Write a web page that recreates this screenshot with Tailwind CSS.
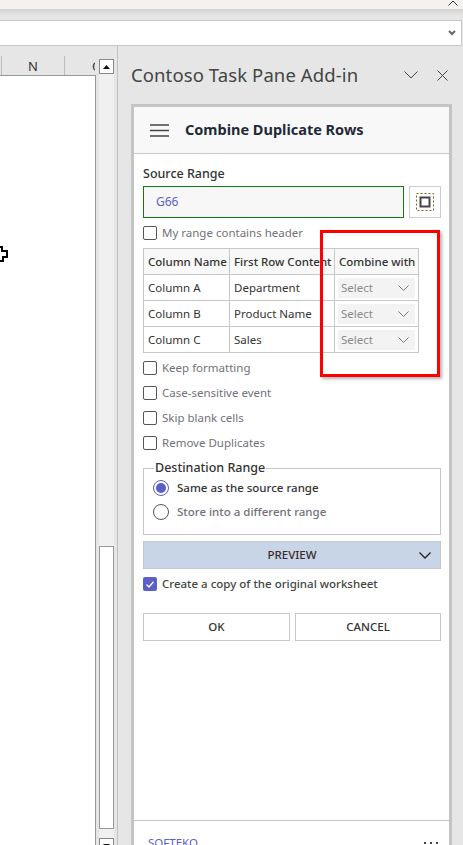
<!DOCTYPE html>
<html lang="en">
<head>
  <meta charset="UTF-8">
  <meta name="viewport" content="width=device-width, initial-scale=1.0">
  <title>Combine Duplicate Rows</title>
  <script src="https://cdn.jsdelivr.net/npm/@tailwindcss/browser@4"></script>
</head>

<body class="relative w-[463px] h-[845px] overflow-hidden bg-[#e6e6e6] font-['Noto_Sans','Open_Sans',sans-serif] text-[#323130]">

  <!-- ribbon edge -->
  <div class="relative h-[9px] bg-[#f3f2f1]">
    <svg class="absolute left-[448px] top-0 w-[10px] h-[6px]" viewBox="0 0 10 6" fill="none" stroke="#333" stroke-width="1"><path d="M0.5 5.5 L5 1 L9.5 5.5"/></svg>
  </div>
  <div class="h-[7px] bg-gradient-to-b from-[#d2d2d2] to-[#e6e6e6]"></div>

  <!-- formula bar -->
  <div class="mt-[4px] h-[26px] bg-white border-y border-r border-[#c8c8c8] mr-[1px] flex items-center justify-end pr-[5px]">
    <svg class="w-[8px] h-[6px]" viewBox="0 0 8 6" fill="none" stroke="#666" stroke-width="2"><path d="M1 1 L4 4 L7 1"/></svg>
  </div>

  <div class="flex h-[799px]">
    <!-- sheet -->
    <div class="w-[99px] shrink-0 pt-[10px]">
      <div class="h-[20px] w-[96px] flex text-[13px] leading-[20px] text-[#333] border-b border-[#999]">
        <div class="w-[1px] h-[19px] ml-[1px] bg-[#bbb]"></div>
        <div class="w-[62px] text-center">N</div>
        <div class="w-[1px] h-[19px] bg-[#bbb]"></div>
        <div class="w-[30px] overflow-hidden pl-[27px]">O</div>
      </div>
      <div class="w-[96px] h-[800px] bg-white border-r border-[#999]"></div>
    </div>

    <!-- sheet scrollbar -->
    <div class="w-[15px] shrink-0 h-[794px] mt-[13px] bg-[#f0f0f0] flex flex-col justify-between">
      <div>
        <button class="w-[15px] h-[15px] bg-white border border-[#888] flex items-center justify-center">
          <svg class="w-[7px] h-[4px]" viewBox="0 0 7 4" fill="#111"><path d="M3.5 0 L7 4 L0 4 Z"/></svg>
        </button>
      </div>
      <div class="flex flex-col">
        <div class="w-[15px] h-[283px] bg-white border border-[#999] mb-[9px]"></div>
        <button class="w-[15px] h-[15px] bg-white border border-[#888] flex items-center justify-center">
          <svg class="w-[7px] h-[4px]" viewBox="0 0 7 4" fill="#111"><path d="M0 0 L7 0 L3.5 4 Z"/></svg>
        </button>
      </div>
    </div>

    <!-- task pane -->
    <div class="ml-[3px] w-[345px] shrink-0 border-l border-[#c0c0c0] pl-[13px] pt-[14px]">
      <div class="flex items-center h-[30px] w-[319px]">
        <div class="text-[18.5px] leading-[30px] text-[#444] tracking-[0.1px] whitespace-nowrap">Contoso Task Pane Add-in</div>
        <svg class="ml-auto w-[14px] h-[8px]" viewBox="0 0 14 8" fill="none" stroke="#444" stroke-width="1"><path d="M0.5 0.5 L7 7 L13.5 0.5"/></svg>
        <svg class="ml-[19px] mr-[2px] w-[11px] h-[11px]" viewBox="0 0 11 11" fill="none" stroke="#444" stroke-width="1"><path d="M0.5 0.5 L10.5 10.5 M10.5 0.5 L0.5 10.5"/></svg>
      </div>

      <div class="mt-[14px] w-[321px] h-[760px] bg-white border-[3px] border-b-0 border-[#c4c4c4] border-t-[3px] flex flex-col">
        <!-- card header -->
        <div class="h-[47px] shrink-0 bg-[#f8f8f8] border-b border-[#c8c8c8] flex items-center pl-[16px]">
          <svg class="w-[19px] h-[13px]" viewBox="0 0 19 13" fill="none" stroke="#444" stroke-width="1.5"><path d="M0 1 H19 M0 6.5 H19 M0 12 H19"/></svg>
          <div class="ml-[16px] text-[14.5px] font-bold text-[#1f2a3a] whitespace-nowrap">Combine Duplicate Rows</div>
        </div>

        <div class="flex-1 pl-[9px] pr-[8px]">
          <div class="mt-[11px] text-[12.5px] leading-[18px] font-medium text-[#333]">Source Range</div>

          <div class="mt-[3px] flex gap-[5px]">
            <div class="w-[261px] h-[32px] bg-[#f7f7f7] border border-[#107c10] pl-[12px] text-[12px] leading-[30px] text-[#5b5fc7]">G66</div>
            <button class="w-[32px] h-[32px] bg-white border border-[#ccc] flex items-center justify-center">
              <svg class="w-[18px] h-[18px]" viewBox="0 0 18 18" fill="none">
                <rect x="0.5" y="0.5" width="17" height="17" stroke="#8a5a20" stroke-width="1" stroke-dasharray="2 2"/>
                <rect x="4.5" y="4.5" width="9" height="9" stroke="#444" stroke-width="2"/>
              </svg>
            </button>
          </div>

          <label class="mt-[8px] flex items-center h-[14px] gap-[5px] text-[11.5px] text-[#71717a]">
            <span class="w-[14px] h-[14px] border border-[#555] rounded-[2px] bg-white"></span>My range contains header
          </label>

          <table class="mt-[8px] w-[276px] table-fixed border-collapse text-[11.5px] text-[#333]">
            <thead>
              <tr class="h-[26px] bg-[#f8f8f8] font-medium">
                <th class="w-[86px] border border-[#c8c8c8] pl-[4px] text-left font-medium">Column Name</th>
                <th class="w-[105px] border border-[#c8c8c8] pl-[4px] text-left font-medium">First Row Content</th>
                <th class="border border-[#c8c8c8] pl-[4px] text-left font-medium">Combine with</th>
              </tr>
            </thead>
            <tbody>
              <tr class="h-[26px]">
                <td class="border border-[#c8c8c8] pl-[4px]">Column A</td>
                <td class="border border-[#c8c8c8] pl-[4px]">Department</td>
                <td class="border border-[#c8c8c8] px-[3px]">
                  <div class="h-[20px] bg-[#f3f3f3] flex items-center justify-between pl-[3px] pr-[6px] text-[#8a8a8a]">Select
                    <svg class="w-[11px] h-[6px]" viewBox="0 0 11 6" fill="none" stroke="#777" stroke-width="1"><path d="M0.5 0.5 L5.5 5.5 L10.5 0.5"/></svg>
                  </div>
                </td>
              </tr>
              <tr class="h-[26px]">
                <td class="border border-[#c8c8c8] pl-[4px]">Column B</td>
                <td class="border border-[#c8c8c8] pl-[4px]">Product Name</td>
                <td class="border border-[#c8c8c8] px-[3px]">
                  <div class="h-[20px] bg-[#f3f3f3] flex items-center justify-between pl-[3px] pr-[6px] text-[#8a8a8a]">Select
                    <svg class="w-[11px] h-[6px]" viewBox="0 0 11 6" fill="none" stroke="#777" stroke-width="1"><path d="M0.5 0.5 L5.5 5.5 L10.5 0.5"/></svg>
                  </div>
                </td>
              </tr>
              <tr class="h-[26px]">
                <td class="border border-[#c8c8c8] pl-[4px]">Column C</td>
                <td class="border border-[#c8c8c8] pl-[4px]">Sales</td>
                <td class="border border-[#c8c8c8] px-[3px]">
                  <div class="h-[20px] bg-[#f3f3f3] flex items-center justify-between pl-[3px] pr-[6px] text-[#8a8a8a]">Select
                    <svg class="w-[11px] h-[6px]" viewBox="0 0 11 6" fill="none" stroke="#777" stroke-width="1"><path d="M0.5 0.5 L5.5 5.5 L10.5 0.5"/></svg>
                  </div>
                </td>
              </tr>
            </tbody>
          </table>

          <div class="mt-[8px] flex flex-col gap-[11px] text-[11.5px] text-[#71717a]">
            <label class="flex items-center h-[14px] gap-[5px]"><span class="w-[14px] h-[14px] border border-[#555] rounded-[2px] bg-white"></span>Keep formatting</label>
            <label class="flex items-center h-[14px] gap-[5px]"><span class="w-[14px] h-[14px] border border-[#555] rounded-[2px] bg-white"></span>Case-sensitive event</label>
            <label class="flex items-center h-[14px] gap-[5px]"><span class="w-[14px] h-[14px] border border-[#555] rounded-[2px] bg-white"></span>Skip blank cells</label>
            <label class="flex items-center h-[14px] gap-[5px]"><span class="w-[14px] h-[14px] border border-[#555] rounded-[2px] bg-white"></span>Remove Duplicates</label>
          </div>

          <fieldset class="mt-[10px] h-[75px] border border-[#c8c8c8] px-[9px]">
            <legend class="ml-[1px] px-[1px] text-[12.5px] leading-[16px] font-medium text-[#333]">Destination Range</legend>
            <label class="mt-[4px] flex items-center h-[16px] gap-[8px] text-[11.5px] font-medium text-[#333]">
              <span class="w-[16px] h-[16px] rounded-full border border-[#5b5fc7] flex items-center justify-center"><span class="w-[10px] h-[10px] rounded-full bg-[#5b5fc7]"></span></span>Same as the source range
            </label>
            <label class="mt-[8px] flex items-center h-[16px] gap-[8px] text-[11.5px] font-medium text-[#71717a]">
              <span class="w-[16px] h-[16px] rounded-full border border-[#555]"></span>Store into a different range
            </label>
          </fieldset>

          <button class="relative mt-[6px] w-full h-[28px] bg-[#c8d5e6] border border-[#c4c8cc] text-[11.5px] font-medium text-[#3a2a2a]">PREVIEW
            <svg class="absolute right-[9px] top-[10px] w-[12px] h-[7px]" viewBox="0 0 12 7" fill="none" stroke="#222" stroke-width="1.3"><path d="M0.5 0.5 L6 6 L11.5 0.5"/></svg>
          </button>

          <label class="mt-[8px] flex items-center h-[14px] gap-[5px] text-[11.5px] font-medium text-[#444]">
            <span class="w-[14px] h-[14px] rounded-[2px] bg-[#5b5fc7] flex items-center justify-center">
              <svg class="w-[8px] h-[7px]" viewBox="0 0 8 7" fill="none" stroke="#fff" stroke-width="1.3"><path d="M0.5 3.5 L3 6 L7.5 0.8"/></svg>
            </span>Create a copy of the original worksheet
          </label>

          <div class="mt-[22px] flex gap-[5px] text-[11.5px] font-medium text-[#333]">
            <button class="w-[147px] h-[28px] bg-white border border-[#c8c8c8]">OK</button>
            <button class="w-[146px] h-[28px] bg-white border border-[#c8c8c8]">CANCEL</button>
          </div>
        </div>

        <!-- card footer -->
        <div class="h-[44px] shrink-0 border-t border-[#c8c8c8] flex items-center justify-between pl-[14px] pr-[11px] text-[11.5px] text-[#5b5fc7]">
          <span>SOFTEKO</span>
          <span class="flex gap-[4px]">
            <span class="w-[2px] h-[2px] bg-[#444]"></span>
            <span class="w-[2px] h-[2px] bg-[#444]"></span>
            <span class="w-[2px] h-[2px] bg-[#444]"></span>
          </span>
        </div>
      </div>
    </div>
  </div>

  <!-- cell cursor peeking in at the sheet edge -->
  <svg class="absolute left-0 top-[246px] w-[9px] h-[20px]" viewBox="0 0 9 20" fill="none" stroke="#000" stroke-width="2"><path d="M0 1 H2 V5 H7 V11 H3 V15 H0"/></svg>

  <!-- red annotation box drawn over the table -->
  <div class="absolute left-[320px] top-[230px] w-[120px] h-[147px] border-[3px] border-[#ff0000] shadow-[2px_2px_3px_rgba(0,0,0,0.3)]"></div>
</body>

</html>
